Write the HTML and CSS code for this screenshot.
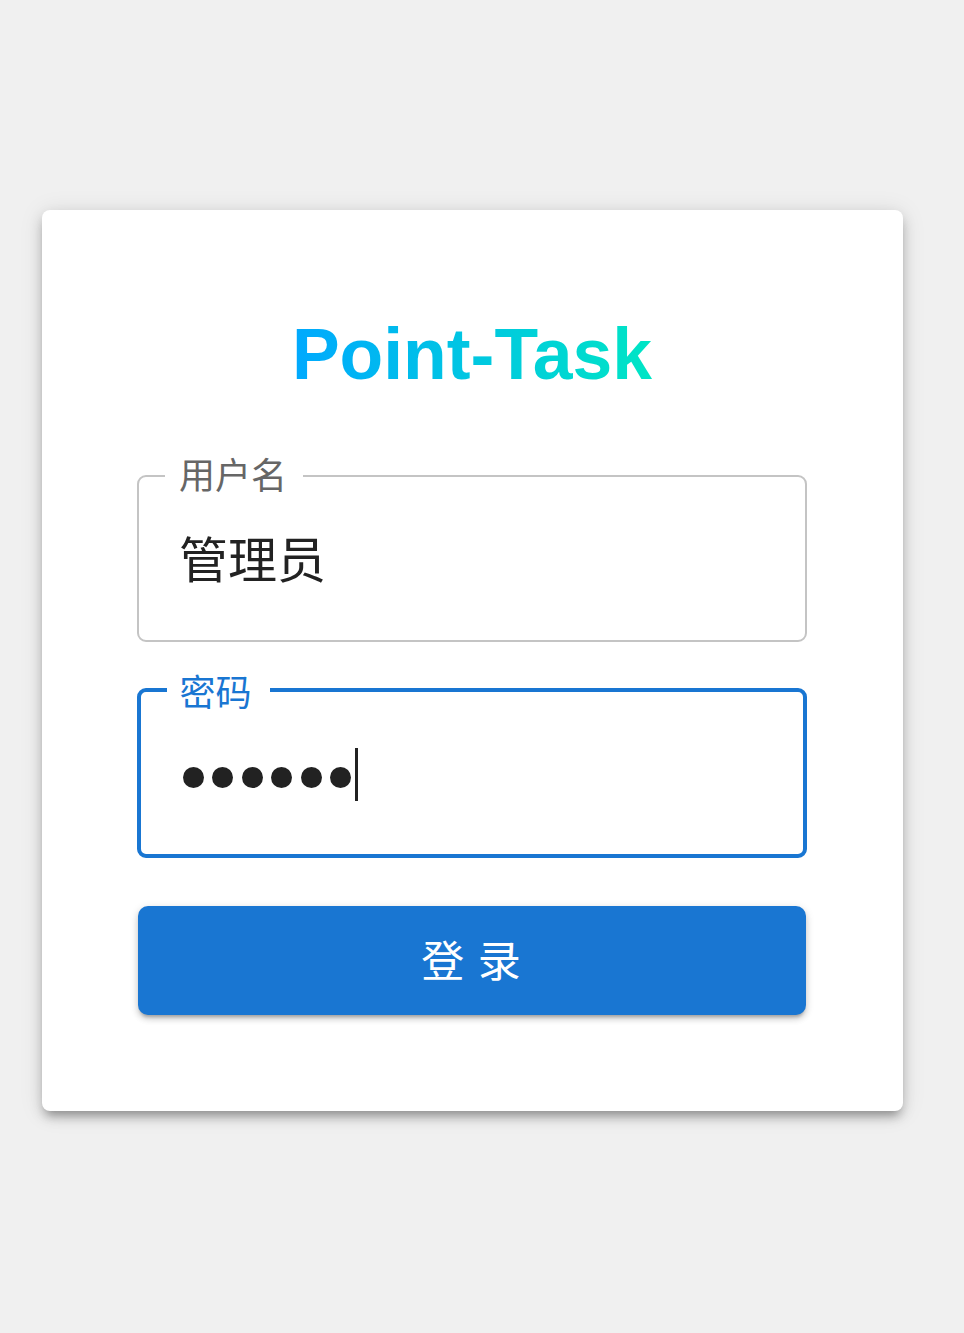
FILE: index.html
```html
<!DOCTYPE html>
<html lang="zh-CN">
<head>
<meta charset="utf-8">
<title>Point-Task 登录</title>
<link rel="stylesheet" href="styles.css">
</head>
<body>
<div class="page">
  <div class="card">
    <h1 class="title">Point-Task</h1>
    <div class="field field-user">
      <span class="label">用户名</span>
      <div class="value">管理员</div>
    </div>
    <div class="field field-pass">
      <span class="label">密码</span>
      <div class="value">
        <span class="dots"><i class="dot"></i><i class="dot"></i><i class="dot"></i><i class="dot"></i><i class="dot"></i><i class="dot"></i></span><span class="caret"></span>
      </div>
    </div>
    <button class="btn" type="button">登 录</button>
  </div>
</div>
</body>
</html>
```

FILE: styles.css
```css
html, body {
  margin: 0;
  padding: 0;
  background: #f0f0f0;
}
body {
  font-family: "Noto Sans CJK SC", "Noto Sans", sans-serif;
}
.page {
  padding: 210px 0 200px 42px;
}
.card {
  width: 861px;
  box-sizing: border-box;
  padding: 109px 96px 96px 95px;
  background: #fff;
  border-radius: 8px;
  box-shadow: 0 8px 10px -4px rgba(0,0,0,0.28), 0 6px 14px rgba(0,0,0,0.14), 0 2px 24px rgba(0,0,0,0.10);
}
.title {
  margin: 0 auto;
  height: 70px;
  width: 370px;
  font-family: "Liberation Sans", Arial, sans-serif;
  font-weight: 700;
  font-size: 71.5px;
  line-height: 70px;
  text-align: center;
  background: linear-gradient(90deg, #00a8ff 0%, #00e6c4 100%);
  -webkit-background-clip: text;
  background-clip: text;
  color: transparent;
}
.field {
  position: relative;
  width: 670px;
  box-sizing: border-box;
  border-radius: 9px;
  background: #fff;
  display: flex;
  align-items: center;
}
.field-user {
  margin-top: 86px;
  height: 167px;
  border: 2px solid #c4c4c4;
  padding: 0 40px;
}
.field-pass {
  margin-top: 46px;
  height: 170px;
  border: 4.5px solid #1976d2;
  padding: 0 37.5px;
}
.label {
  position: absolute;
  background: #fff;
  font-size: 36px;
  line-height: 36px;
  color: #666;
  white-space: nowrap;
}
.field-user .label {
  top: -22px;
  left: 26px;
  padding: 0 16px 0 14px;
}
.field-pass .label {
  top: -20px;
  left: 25.5px;
  padding: 0 18px 0 13px;
  color: #1976d2;
}
.value {
  font-size: 49px;
  line-height: 49px;
  color: #222;
  display: flex;
  align-items: center;
}
.field-user .value {
  margin-top: -5px;
}
.field-pass .value {
  height: 53px;
  margin-top: 3px;
}
.dots {
  display: flex;
  gap: 8.5px;
  margin-left: 4px;
  margin-top: 5px;
}
.dot {
  display: block;
  width: 21px;
  height: 21px;
  border-radius: 50%;
  background: #222;
}
.caret {
  display: block;
  width: 2.5px;
  height: 53px;
  margin-left: 4px;
  background: #222;
}
.btn {
  display: block;
  margin-top: 48px;
  width: 668px;
  height: 109px;
  margin-left: 1px;
  padding: 0 0 4px;
  border: 0;
  border-radius: 10px;
  background: #1976d2;
  color: #fff;
  font-family: "Noto Sans CJK SC", "Noto Sans", sans-serif;
  font-size: 43px;
  line-height: 1;
  letter-spacing: 2px;
  cursor: pointer;
  box-shadow: 0 4px 3px -2px rgba(0,0,0,0.2), 0 4px 6px rgba(0,0,0,0.14), 0 2px 10px rgba(0,0,0,0.12);
}
```
